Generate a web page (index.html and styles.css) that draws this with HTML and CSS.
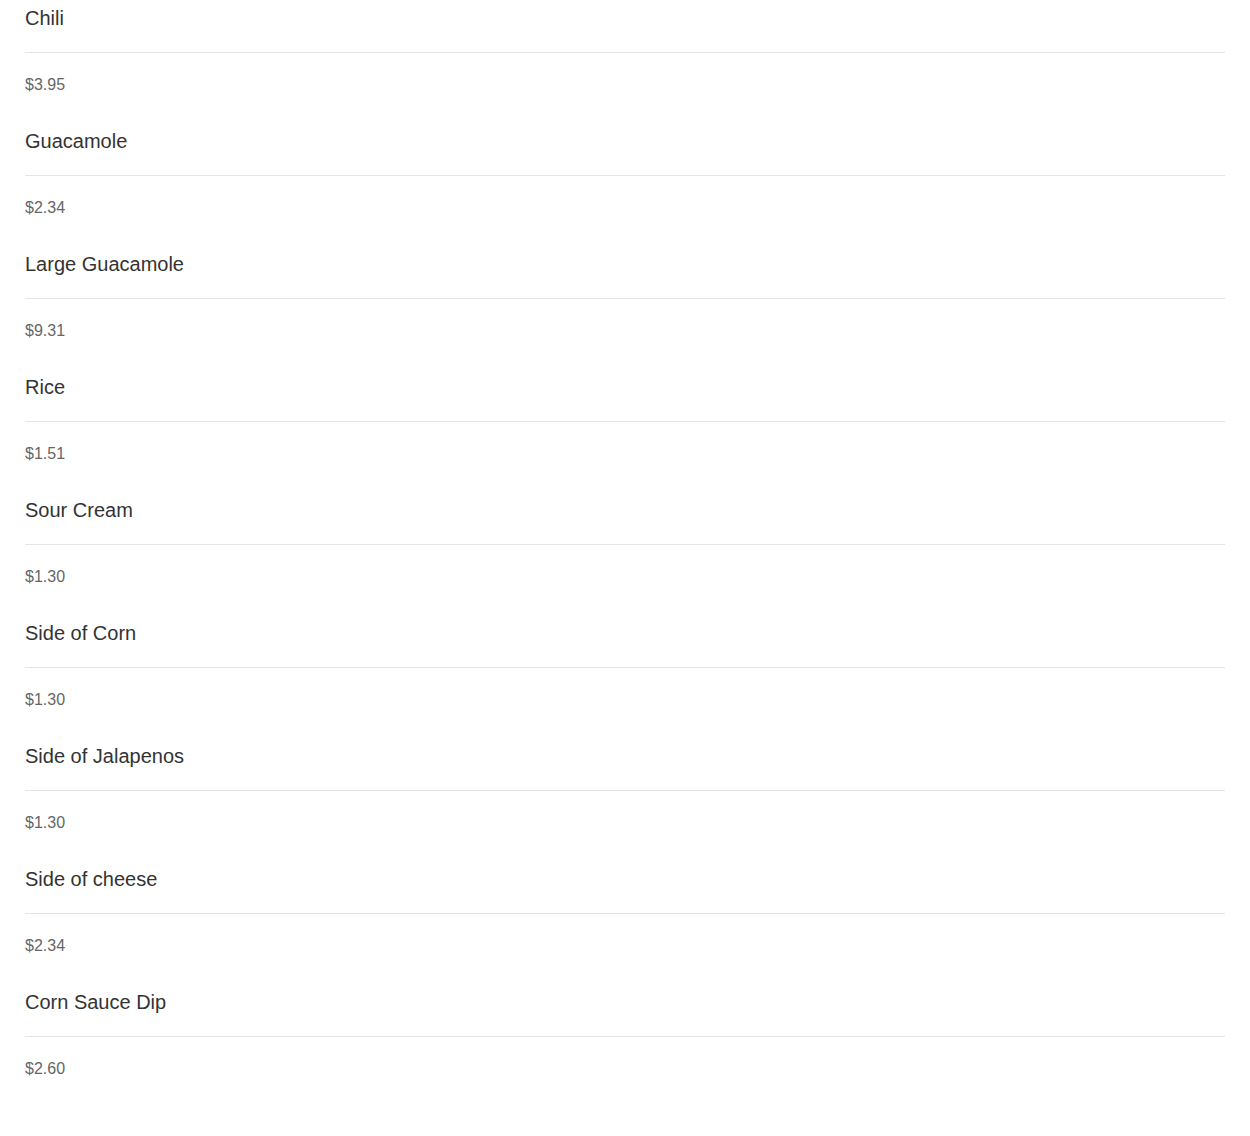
FILE: index.html
```html
<!DOCTYPE html>
<html>
<head>
<meta charset="utf-8">
<link rel="stylesheet" href="styles.css">
</head>
<body>
<div class="menu">
  <div class="item"><div class="name">Chili</div><div class="price">$3.95</div></div>
  <div class="item"><div class="name">Guacamole</div><div class="price">$2.34</div></div>
  <div class="item"><div class="name">Large Guacamole</div><div class="price">$9.31</div></div>
  <div class="item"><div class="name">Rice</div><div class="price">$1.51</div></div>
  <div class="item"><div class="name">Sour Cream</div><div class="price">$1.30</div></div>
  <div class="item"><div class="name">Side of Corn</div><div class="price">$1.30</div></div>
  <div class="item"><div class="name">Side of Jalapenos</div><div class="price">$1.30</div></div>
  <div class="item"><div class="name">Side of cheese</div><div class="price">$2.34</div></div>
  <div class="item"><div class="name">Corn Sauce Dip</div><div class="price">$2.60</div></div>
</div>
</body>
</html>
```
FILE: styles.css
```css
html, body {
  margin: 0;
  padding: 0;
  background: #ffffff;
}
body {
  font-family: "Liberation Sans", Arial, sans-serif;
}
.menu {
  padding: 0 25px;
}
.item {
  padding: 7px 0 29px;
}
.name {
  font-size: 20px;
  line-height: 23px;
  color: #333333;
  padding-bottom: 22px;
  border-bottom: 1px solid #e5e5e5;
}
.price {
  margin-top: 22px;
  font-size: 16px;
  line-height: 19px;
  color: #666666;
}
```
